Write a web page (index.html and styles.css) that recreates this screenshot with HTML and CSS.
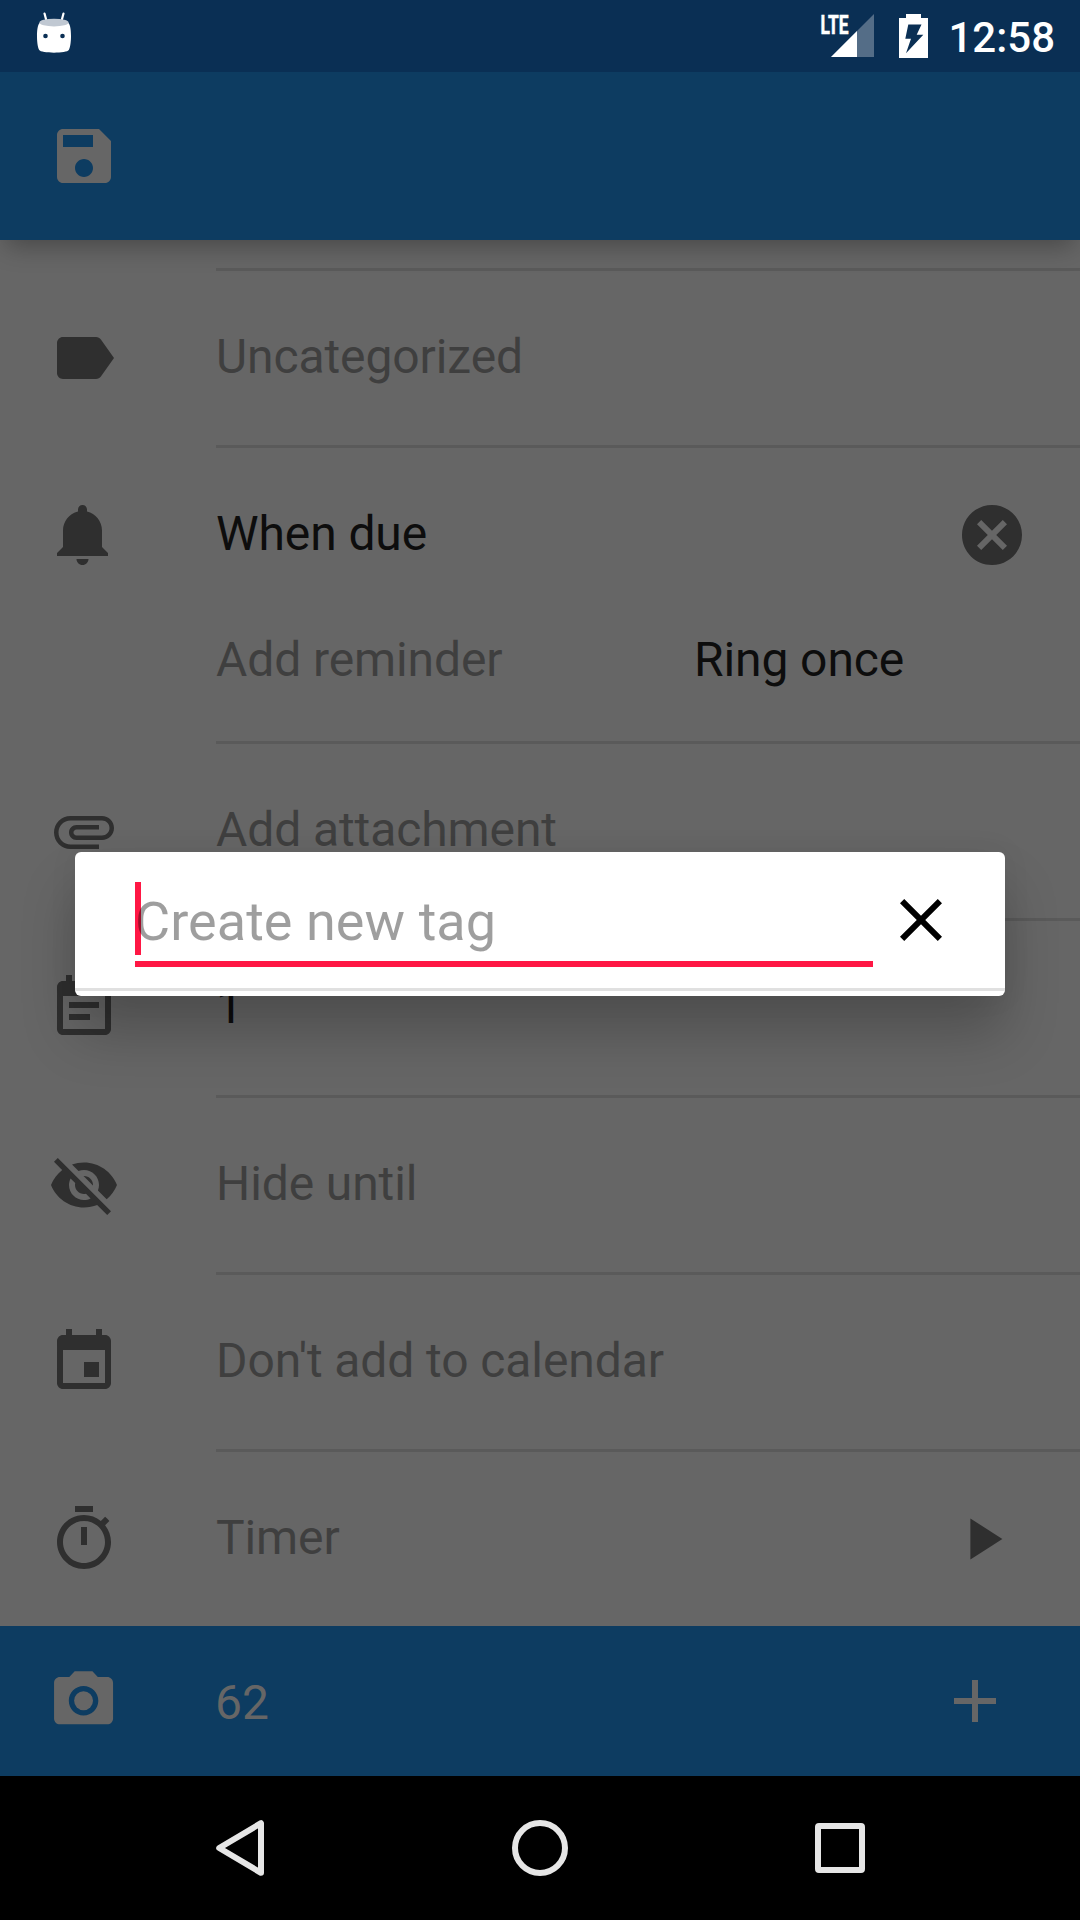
FILE: index.html
```html
<!DOCTYPE html>
<html lang="en">
<head>
<meta charset="utf-8">
<title>Task</title>
<link rel="stylesheet" href="styles.css">
</head>
<body>
<div class="screen">
  <div class="status-bar">
    <svg class="head-icon" width="36" height="42" viewBox="36 12 36 42">
      <path d="M44.5 13.5L46.5 21M63.5 13.5L61.5 21" stroke="#fff" stroke-width="2.2" stroke-linecap="round"/>
      <path fill="#fff" d="M39.5 23C40 21.5 68 21.5 68.500 23C70.500 25 71 31 71 36C71 41 70.500 47 68.800 50C67 53.500 41 53.500 39.200 50C37.500 47 37 41 37 36C37 31 37.500 25 39.500 23z"/>
      <ellipse cx="54" cy="22.600" rx="14.600" ry="3.900" fill="#c0c8d2"/>
      <circle cx="45.500" cy="36" r="2.300" fill="#0a2f54"/>
      <circle cx="62.500" cy="36" r="2.300" fill="#0a2f54"/>
    </svg>
    <div class="status-right">
      <svg class="signal" width="62" height="58" viewBox="812 0 62 58">
        <path fill="#546d87" d="M874 14V57H831z"/>
        <path fill="#fff" d="M857 31V57H831z"/>
        <text class="lte" x="820.500" y="33.500" textLength="28" lengthAdjust="spacingAndGlyphs">LTE</text>
      </svg>
      <svg class="battery" width="29" height="44" viewBox="899 14 29 44">
        <path fill="#fff" d="M906 14h15v4h7v40h-29V18h7z"/>
        <path fill="#0a2f54" d="M908.300 24.500h13.200l-4.800 10.200h6.600L906 53.300l5-14.600h-5.700z"/>
      </svg>
      <span class="clock">12:58</span>
    </div>
  </div>

  <div class="app-bar">
    <svg class="icon light" viewBox="0 0 24 24"><path d="M17 3H5c-1.110 0-2 .9-2 2v14c0 1.100.89 2 2 2h14c1.100 0 2-.9 2-2V7l-4-4zm-5 16c-1.660 0-3-1.340-3-3s1.340-3 3-3 3 1.340 3 3-1.340 3-3 3zm3-10H5V5h10v4z"/></svg>
  </div>

  <div class="list">
    <div class="row stub"><div class="body"></div></div>

    <div class="row">
      <svg class="icon" viewBox="0 0 24 24"><path d="M17.630 5.840C17.270 5.330 16.670 5 16 5L5 5.010C3.900 5.010 3 5.900 3 7v10c0 1.100.9 1.990 2 1.990L16 19c.67 0 1.270-.33 1.630-.84L22 12l-4.370-6.160z"/></svg>
      <div class="body"><span class="hint">Uncategorized</span></div>
    </div>

    <div class="row reminders">
      <svg class="icon" viewBox="0 0 24 24"><path d="M11.500 22c1.100 0 2-.9 2-2h-4c0 1.100.9 2 2 2zm6.500-6v-5.500c0-3.070-2.130-5.640-5-6.320V3.500c0-.83-.67-1.500-1.500-1.500S10 2.670 10 3.500v.68c-2.870.68-5 3.250-5 6.320V16l-2 2v1h17v-1l-2-2z"/></svg>
      <div class="body">
        <div class="line due">
          <span>When due</span>
          <svg class="icon" viewBox="0 0 24 24"><path d="M12 2C6.470 2 2 6.470 2 12s4.470 10 10 10 10-4.470 10-10S17.530 2 12 2zm5 13.590L15.590 17 12 13.410 8.410 17 7 15.590 10.590 12 7 8.410 8.410 7 12 10.590 15.590 7 17 8.410 13.410 12 17 15.590z"/></svg>
        </div>
        <div class="line add">
          <span class="hint">Add reminder</span>
          <span class="ring">Ring once</span>
        </div>
      </div>
    </div>

    <div class="row">
      <svg class="icon" viewBox="0 0 24 24"><path d="M7.500 18C4.460 18 2 15.540 2 12.500S4.460 7 7.500 7H18c2.210 0 4 1.790 4 4s-1.790 4-4 4H9.500C8.120 15 7 13.880 7 12.500S8.120 10 9.500 10H17v1.500H9.500c-.55 0-1 .45-1 1s.45 1 1 1H18c1.380 0 2.500-1.120 2.500-2.500S19.380 8.500 18 8.500H7.500c-2.210 0-4 1.790-4 4s1.790 4 4 4H17V18H7.500z"/></svg>
      <div class="body"><span class="hint">Add attachment</span></div>
    </div>

    <div class="row">
      <svg class="icon" viewBox="0 0 24 24"><path d="M17 10H7v2h10v-2zm2-7h-1V1h-2v2H8V1H6v2H5c-1.110 0-1.990.9-1.990 2L3 19c0 1.100.89 2 2 2h14c1.100 0 2-.9 2-2V5c0-1.100-.9-2-2-2zm0 16H5V8h14v11zm-5-5H7v2h7v-2z"/></svg>
      <div class="body"><span>1</span></div>
    </div>

    <div class="row">
      <svg class="icon" viewBox="0 0 24 24"><path d="M12 7c2.760 0 5 2.240 5 5 0 .65-.13 1.260-.36 1.830l2.920 2.920c1.510-1.260 2.700-2.890 3.430-4.750-1.730-4.390-6-7.500-11-7.500-1.400 0-2.740.25-3.980.7l2.160 2.160C10.740 7.130 11.350 7 12 7zM2 4.270l2.280 2.280.46.46C3.080 8.300 1.780 10.020 1 12c1.730 4.390 6 7.500 11 7.500 1.550 0 3.030-.3 4.380-.84l.42.42L19.730 22 21 20.730 3.270 3 2 4.270zM7.530 9.800l1.550 1.550c-.05.21-.08.43-.08.65 0 1.660 1.340 3 3 3 .22 0 .44-.03.65-.08l1.550 1.550c-.67.33-1.410.53-2.200.53-2.760 0-5-2.240-5-5 0-.79.2-1.530.53-2.200zm4.310-.78l3.150 3.150.02-.16c0-1.660-1.340-3-3-3l-.17.01z"/></svg>
      <div class="body"><span class="hint">Hide until</span></div>
    </div>

    <div class="row">
      <svg class="icon" viewBox="0 0 24 24"><path d="M17 12h-5v5h5v-5zM16 1v2H8V1H6v2H5c-1.110 0-1.990.9-1.990 2L3 19c0 1.100.89 2 2 2h14c1.100 0 2-.9 2-2V5c0-1.100-.9-2-2-2h-1V1h-2zm3 18H5V8h14v11z"/></svg>
      <div class="body"><span class="hint">Don't add to calendar</span></div>
    </div>

    <div class="row last">
      <svg class="icon" viewBox="0 0 24 24"><path d="M15 1H9v2h6V1zm-4 13h2V8h-2v6zm8.030-6.610l1.420-1.420c-.43-.51-.9-.99-1.410-1.410l-1.420 1.420C16.070 4.740 14.120 4 12 4c-4.970 0-9 4.030-9 9s4.020 9 9 9 9-4.030 9-9c0-2.120-.74-4.070-1.970-5.610zM12 20c-3.870 0-7-3.130-7-7s3.130-7 7-7 7 3.130 7 7-3.130 7-7 7z"/></svg>
      <div class="body timer">
        <span class="hint">Timer</span>
        <svg class="icon" viewBox="0 0 72 72"><path d="M24.400 15.500v41L56.400 36z"/></svg>
      </div>
    </div>
  </div>

  <div class="comment-bar">
    <svg class="icon light" viewBox="-0.050 -0.100 24.400 24.400"><path d="M9 2L7.170 4H4c-1.100 0-2 .9-2 2v12c0 1.100.9 2 2 2h16c1.100 0 2-.9 2-2V6c0-1.100-.9-2-2-2h-3.170L15 2H9zm3 15c-2.760 0-5-2.240-5-5s2.240-5 5-5 5 2.240 5 5-2.240 5-5 5z"/><circle cx="12" cy="12" r="3.200"/></svg>
    <span class="count">62</span>
    <svg class="icon light" viewBox="0 0 24 24"><path d="M19 13h-6v6h-2v-6H5v-2h6V5h2v6h6v2z"/></svg>
  </div>

  <div class="nav-bar">
    <svg class="icon" viewBox="204 1812 72 72"><path d="M261 1823.200V1872.800L219.200 1848z"/></svg>
    <svg class="icon" viewBox="504 1812 72 72"><circle cx="540" cy="1848" r="25"/></svg>
    <svg class="icon" viewBox="804 1812 72 72"><rect x="818" y="1826" width="44" height="44" rx="1"/></svg>
  </div>

  <div class="dialog">
    <div class="tag-entry">
      <div class="field"><span class="placeholder">Create new tag</span></div>
      <svg class="icon" viewBox="0 0 24 24"><path d="M19 6.410L17.590 5 12 10.590 6.410 5 5 6.410 10.590 12 5 17.590 6.410 19 12 13.410 17.590 19 19 17.590 13.410 12z"/></svg>
    </div>
  </div>
</div>
</body>
</html>
```
FILE: styles.css
```css
* { box-sizing: border-box; }

body {
  margin: 0;
  background: #666;
  font-family: Roboto, "Noto Sans", sans-serif;
}

.screen {
  position: relative;
  display: flex;
  flex-direction: column;
  width: 1080px;
  height: 1920px;
  overflow: hidden;
  background: #666;
  color: #0d0d0d;
  font-size: 48px;
  letter-spacing: -0.1px;
  line-height: 56px;
}

.icon {
  display: block;
  flex: none;
  width: 72px;
  height: 72px;
  fill: #2f2f2f;
}

.icon.light { fill: #666; }

.status-bar {
  position: relative;
  z-index: 1;
  display: flex;
  justify-content: space-between;
  height: 72px;
  padding: 0 25px 0 36px;
  background: #0a2f54;
}

.head-icon { margin-top: 12px; }

.status-right { display: flex; align-items: flex-start; }

.lte {
  fill: #fff;
  stroke: #fff;
  stroke-width: 0.6px;
  font-size: 26px;
  font-weight: 700;
  letter-spacing: 0;
}

.battery { margin: 14px 20px 0 25px; }

.clock {
  margin-top: 13px;
  color: #fff;
  font-size: 42px;
  font-weight: 500;
  letter-spacing: 0;
  line-height: 50px;
}

.app-bar {
  position: relative;
  display: flex;
  align-items: center;
  height: 168px;
  padding: 0 48px;
  background: #0d3c61;
  box-shadow: 0 12px 24px -6px rgba(0, 0, 0, 0.3);
}

.list {
  display: flex;
  flex-direction: column;
  height: 1386px;
}

.row {
  display: flex;
  align-items: center;
  gap: 96px;
  height: 177px;
  padding-left: 48px;
}

.row > .icon { margin-bottom: 3px; }

.row .body {
  display: flex;
  flex: 1;
  align-items: center;
  height: 100%;
  padding-bottom: 2px;
  border-bottom: 3px solid #5a5a5a;
}

.row.stub { height: 31px; padding-left: 216px; }

.hint { color: #3f3f3f; }

.row.reminders { align-items: flex-start; height: 296px; }

.row.reminders > .icon { margin-top: 51px; }

.row.reminders .body {
  flex-direction: column;
  align-items: stretch;
  padding-bottom: 0;
}

.line {
  display: flex;
  align-items: center;
}

.line span { padding-bottom: 2px; }

.line.due {
  justify-content: space-between;
  height: 174px;
  padding-right: 52px;
}

.line.add { height: 78px; }

.line.add .hint { width: 478px; }

.row.last { height: 174px; }

.row.last > .icon { margin-bottom: 0; }

.row.last .body { border-bottom: 0; }

.body.timer { justify-content: space-between; padding-right: 62px; }

.body.timer .icon { margin-top: 2px; }

.comment-bar {
  display: flex;
  align-items: center;
  height: 150px;
  padding: 0 69px 0 48px;
  background: #0d3c61;
}

.count {
  flex: 1;
  padding: 4px 0 0 95px;
  color: #666;
}

.nav-bar {
  display: flex;
  align-items: center;
  justify-content: space-between;
  height: 144px;
  padding: 0 204px;
  background: #000;
}

.nav-bar .icon {
  fill: none;
  stroke: #e6e6e6;
  stroke-width: 6px;
  stroke-linejoin: round;
}

.dialog {
  position: absolute;
  top: 852px;
  left: 75px;
  width: 930px;
  height: 144px;
  border-radius: 6px;
  background: #fff;
  box-shadow: 0 38px 54px rgba(0, 0, 0, 0.22), 0 0 30px rgba(0, 0, 0, 0.06);
}

.tag-entry {
  display: flex;
  align-items: flex-start;
  gap: 12px;
  height: 139px;
  padding: 30px 48px 0 60px;
  border-bottom: 3px solid #e0e0e0;
}

.field {
  width: 738px;
  height: 85px;
  padding-top: 8px;
  border-bottom: 6px solid #ff1744;
  background: linear-gradient(#ff1744, #ff1744) 0 0 / 6px 73px no-repeat;
}

.placeholder {
  color: rgba(0, 0, 0, 0.38);
  font-size: 54px;
  letter-spacing: 0.05px;
  line-height: 64px;
}

.tag-entry .icon { margin-top: 2px; fill: #000; }
```
